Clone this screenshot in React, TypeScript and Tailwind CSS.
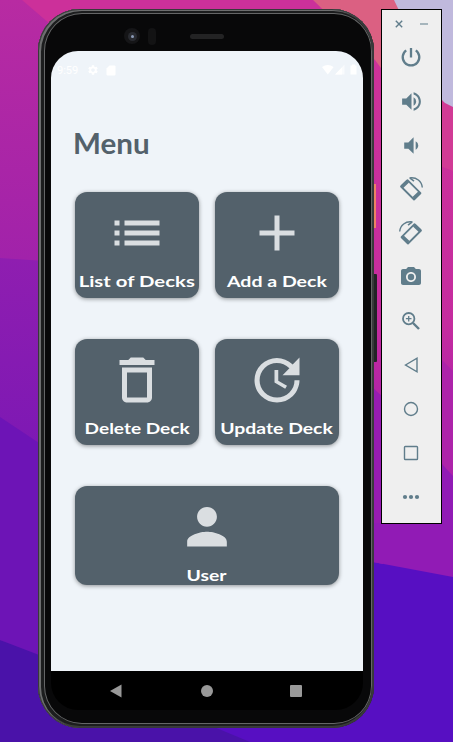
import type { ReactNode } from 'react';
import {
  MdAdd, MdCameraAlt, MdList, MdPerson, MdSettings, MdVolumeDown, MdVolumeUp,
} from 'react-icons/md';

function Wallpaper() {
  return (
    <svg className="absolute inset-0" width="453" height="742" viewBox="0 0 453 742">
      <defs>
        <linearGradient id="left" x1="0" y1="0" x2="0" y2="1">
          <stop offset="0" stopColor="#b82ba2" />
          <stop offset="0.35" stopColor="#a122aa" />
          <stop offset="1" stopColor="#8a1cb4" />
        </linearGradient>
        <linearGradient id="right" x1="0" y1="0" x2="0" y2="1">
          <stop offset="0" stopColor="#cf3498" />
          <stop offset="0.55" stopColor="#c52c9f" />
          <stop offset="0.75" stopColor="#a81fac" />
          <stop offset="1" stopColor="#8b1bb4" />
        </linearGradient>
        <linearGradient id="violet" x1="0" y1="0" x2="0" y2="1">
          <stop offset="0" stopColor="#8f1eb0" />
          <stop offset="1" stopColor="#7c18b4" />
        </linearGradient>
      </defs>
      <rect width="230" height="742" fill="url(#left)" />
      <rect x="230" width="223" height="590" fill="url(#right)" />
      <path d="M22 0H320V30H57Z" fill="#cc309a" />
      <path d="M0 258L60 262V460L0 418Z" fill="url(#violet)" />
      <path d="M0 417L60 457V670L0 640Z" fill="#6d14b6" />
      <path d="M190 718L340 555L453 576V742H190Z" fill="#570fc2" />
      <path d="M0 640L60 663L250 742H0Z" fill="#4a12a9" />
      <path d="M313 0H396L453 112V150H442L375 60Z" fill="#db6082" />
      <path d="M440 98L453 107V171L440 166Z" fill="#d13b95" />
      <path d="M394 0H453V107L445 103Q441 100 439 94Z" fill="#c0b9dd" />
      <path d="M373 388L383 397V564L373 562Z" fill="#971cb2" />
      <path d="M440 358L453 371V480L440 460Z" fill="#ad23aa" />
      <path d="M440 462L453 476V577L373 562V523H440Z" fill="#911bb5" />
    </svg>
  );
}

function StatusBar() {
  return (
    <div className="flex h-[38px] items-center px-[6px] text-white">
      <span className="w-[30px] font-['Roboto','Liberation_Sans',sans-serif] text-[11px] leading-none">9:59</span>
      <MdSettings size={12} />
      <svg className="ml-[7px]" width="10" height="11" viewBox="0 0 10 11" fill="currentColor">
        <path d="M3.500 0.500H8.500Q9.500 0.500 9.500 1.500V9.500Q9.500 10.500 8.500 10.500H1.500Q0.500 10.500 0.500 9.500V3.500Z" />
      </svg>
      <svg className="ml-auto" width="35" height="12" viewBox="0 0 35 12" fill="currentColor">
        <path d="M0 3Q5.800 -1 11.600 3L5.800 10.500Z" />
        <path d="M13 10.500L22.500 0.500V10.500Z" opacity="0.6" />
        <path d="M13 10.500L20 3.500V10.500Z" />
        <path d="M28.500 1.500H30V0.500H33V1.500H34.500V10.500H28.500Z" />
      </svg>
    </div>
  );
}

function Glyph({ d, size = 60 }: { d: string; size?: number }) {
  return <svg width={size} height={size} viewBox="0 0 24 24" fill="currentColor"><path d={d} /></svg>;
}

const TRASH = 'M6 19c0 1.100.9 2 2 2h8c1.100 0 2-.9 2-2V7H6v12zM8 9h8v10H8V9zm7.500-5l-1-1h-5l-1 1H5v2h14V4z';
const UPDATE = 'M21 10.120h-6.780l2.740-2.820c-2.730-2.700-7.150-2.800-9.880-.1-2.730 2.710-2.730 7.080 0 9.790s7.150 2.710 9.880 0C18.320 15.650 19 14.080 19 12.100h2c0 1.980-.88 4.550-2.640 6.290-3.510 3.480-9.210 3.480-12.720 0-3.500-3.470-3.530-9.110-.02-12.580s9.140-3.470 12.650 0L21 3v7.120zM12.500 8v4.250l3.500 2.080-.72 1.210L11 13V8h1.500z';

function Card({ icon, label, stretch, className }: { icon: ReactNode; label: string; stretch: string; className: string }) {
  return (
    <button className={`flex flex-col items-center rounded-[12px] bg-[#53616b] pt-[11.5px] text-[#dadee1] shadow-[0_1px_4px_rgba(0,0,0,0.4)] ${className}`}>
      {icon}
      <span className={`mt-2 inline-block text-[16px] leading-5 font-bold whitespace-nowrap text-white ${stretch}`}>{label}</span>
    </button>
  );
}

function RotateIcon({ flip }: { flip?: boolean }) {
  return (
    <svg className={flip ? '-scale-x-100' : ''} width="26" height="26" viewBox="0 0 26 26" fill="none" stroke="currentColor">
      <path d="M3 10.500L9.500 4.200L22.500 17.200L16 23.500Z" strokeWidth="1.800" strokeLinejoin="round" />
      <path d="M4 10.800L9.800 5.200M15.700 22.300L21.500 16.700" strokeWidth="3.600" />
      <path d="M11.500 2C18.500 0.800 23.800 5.500 24.300 11.500" strokeWidth="1.400" />
      <path d="M12 2.200L16 5.200" strokeWidth="1.600" />
    </svg>
  );
}

function Toolbar() {
  const tools: ReactNode[] = [
    <svg width="22" height="22" viewBox="0 0 22 22" fill="none" stroke="currentColor" strokeWidth="2.300">
      <path d="M11 2V11.500" />
      <path d="M6.200 4.400A8.300 8.300 0 1 0 15.800 4.400" />
    </svg>,
    <MdVolumeUp size={25} />,
    <MdVolumeDown size={25} />,
    <RotateIcon />,
    <RotateIcon flip />,
    <MdCameraAlt size={24} />,
    <svg width="20" height="20" viewBox="0 0 20 20" fill="none" stroke="currentColor">
      <circle cx="7.700" cy="7.700" r="5.700" strokeWidth="1.800" />
      <path d="M12 12L18 18" strokeWidth="2.400" />
      <path d="M7.700 4.900V10.500M4.900 7.700H10.500" strokeWidth="1.300" />
    </svg>,
    <svg width="16" height="18" viewBox="0 0 16 18" fill="none" stroke="currentColor" strokeWidth="1.400"><path d="M2.500 9L14 2.200V15.800Z" /></svg>,
    <svg width="16" height="16" viewBox="0 0 16 16" fill="none" stroke="currentColor" strokeWidth="1.400"><circle cx="8" cy="8" r="6.500" /></svg>,
    <svg width="16" height="16" viewBox="0 0 16 16" fill="none" stroke="currentColor" strokeWidth="1.400"><rect x="1.500" y="1.500" width="13" height="13" rx="0.800" /></svg>,
    <svg width="18" height="6" viewBox="0 0 18 6" fill="currentColor"><circle cx="3" cy="3" r="2.100" /><circle cx="9" cy="3" r="2.100" /><circle cx="15" cy="3" r="2.100" /></svg>,
  ];
  return (
    <aside className="mt-[9px] ml-[6px] flex h-[515px] w-[61px] shrink-0 flex-col border border-black bg-[#efefef] pr-[1px] text-[#607d8b]">
      <div className="flex h-[25px] items-center justify-center gap-[17px] pt-[3px]">
        <svg width="8" height="8" viewBox="0 0 8 8" stroke="currentColor" strokeWidth="1.400"><path d="M0.800 0.800L7.200 7.200M7.200 0.800L0.800 7.200" /></svg>
        <span className="h-[2px] w-[8px] bg-[#a6b5bc]" />
      </div>
      {tools.map((tool, i) => (
        <div key={i} className="flex h-11 items-center justify-center">{tool}</div>
      ))}
    </aside>
  );
}

export default function App() {
  return (
    <div className="relative flex h-[742px] w-[453px] items-start overflow-hidden font-['Lato','Liberation_Sans',sans-serif]">
      <Wallpaper />
      <div className="relative mt-[9px] ml-[38px] h-[719px] w-[337px] shrink-0">
        <span className="absolute top-[175px] right-[-1px] h-[44px] w-[3px] bg-[#ee8264]" />
        <span className="absolute top-[265px] right-[-2px] h-[88px] w-[4px] rounded-r-[1px] bg-[#222326]" />
        <div className="relative mr-[1px] flex h-full flex-col rounded-[42px] bg-[#080809] pr-[11px] pl-[13px] shadow-[inset_0_0_0_1px_#38393a,inset_2px_1px_0_1px_#6d6e6f,inset_0_0_0_2px_#3a3b3c,inset_2px_0_0_4px_#1c1d1e,inset_2px_0_0_5px_#656667]">
          <div className="flex h-[42px] shrink-0 items-center pt-[12px] pl-[73px]">
            <span className="flex size-[16px] items-center justify-center rounded-full bg-[#151517]">
              <span className="flex size-[9px] items-center justify-center rounded-full bg-[#292b31]">
                <span className="size-[3px] rounded-full bg-[#8d9bb8]" />
              </span>
            </span>
            <span className="ml-[8px] h-[17px] w-[8px] rounded-[4px] bg-[#131314]" />
            <span className="ml-[34px] h-[5px] w-[34px] rounded-full bg-[#232324]" />
          </div>
          <main className="h-[620px] shrink-0 rounded-t-[27px] bg-[#eff4f9]">
            <StatusBar />
            <h1 className="mt-[35px] ml-[21.5px] h-[38px] text-[29px] leading-[38px] font-bold text-[#53616b]">
              <span className="inline-block origin-left scale-x-[1.02]">Menu</span>
            </h1>
            <div className="mt-[29.5px] ml-[24px] grid w-[263.5px] grid-cols-2 gap-x-[16.5px] gap-y-[40.5px]">
              <Card icon={<MdList size={60} />} label="List of Decks" stretch="scale-x-[1.27]" className="h-[106.5px]" />
              <Card icon={<MdAdd size={60} />} label="Add a Deck" stretch="scale-x-[1.22]" className="h-[106.5px]" />
              <Card icon={<Glyph d={TRASH} />} label="Delete Deck" stretch="scale-x-[1.19]" className="h-[106.5px]" />
              <Card icon={<Glyph d={UPDATE} />} label="Update Deck" stretch="scale-x-[1.21]" className="h-[106.5px]" />
              <Card icon={<MdPerson size={60} />} label="User" stretch="scale-x-[1.21]" className="col-span-2 h-[99px]" />
            </div>
          </main>
          <nav className="h-[39px] shrink-0 rounded-b-[27px] bg-black">
            <div className="flex h-full items-center pl-[59px] text-[#999]">
              <svg width="12" height="14" viewBox="0 0 12 14" fill="currentColor"><path d="M0 7L11.500 0.500V13.500Z" /></svg>
              <span className="ml-[78.5px] size-[12px] rounded-full bg-current" />
              <span className="ml-[77.5px] size-[12px] rounded-[1px] bg-current" />
            </div>
          </nav>
        </div>
      </div>
      <div className="relative"><Toolbar /></div>
    </div>
  );
}
